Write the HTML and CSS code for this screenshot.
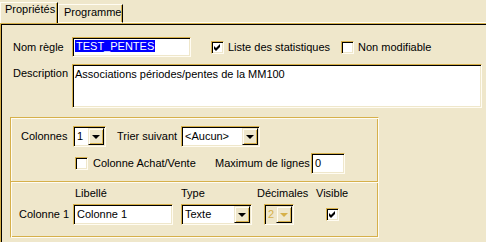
FILE: index.html
```html
<!DOCTYPE html>
<html lang="fr">
<head>
    <meta charset="UTF-8">
    <title>Propriétés de la règle</title>
    <link rel="stylesheet" href="styles.css">
</head>
<body>
    <div class="tabs">
        <div class="tab active">Propriétés</div>
        <div class="tab">Programme</div>
        <div class="tab-fill"></div>
    </div>
    <div class="panel">
        <div class="row row-name">
            <span class="lbl">Nom règle</span>
            <div class="field name"><span class="sel">TEST_PENTES</span></div>
            <div class="check wide">
                <span class="box"><svg width="11" height="11" viewBox="0 0 11 11"><path d="M2 4 L4 6 L8 2 L8 5 L4 9 L2 7 Z" fill="#000"/></svg></span>
                <span>Liste des statistiques</span>
            </div>
            <div class="check">
                <span class="box"></span>
                <span>Non modifiable</span>
            </div>
        </div>
        <div class="row row-desc">
            <span class="lbl lbl-top">Description</span>
            <div class="field desc">Associations périodes/pentes de la MM100</div>
        </div>

        <div class="group">
            <div class="section sec-top">
                <div class="line">
                    <span class="lbl lbl-cols">Colonnes</span>
                    <div class="select sel-cols">
                        <span class="val">1</span>
                        <span class="drop"><i class="arrow"></i></span>
                    </div>
                    <span class="lbl lbl-sort">Trier suivant</span>
                    <div class="select sel-sort">
                        <span class="val">&lt;Aucun&gt;</span>
                        <span class="drop"><i class="arrow"></i></span>
                    </div>
                </div>
                <div class="line line-2">
                    <div class="check achat">
                        <span class="box"></span>
                        <span>Colonne Achat/Vente</span>
                    </div>
                    <span class="lbl lbl-max">Maximum de lignes</span>
                    <div class="field max">0</div>
                </div>
            </div>
            <div class="sep"></div>
            <div class="section sec-cols">
                <div class="heads">
                    <span class="h-lib">Libellé</span>
                    <span class="h-type">Type</span>
                    <span class="h-dec">Décimales</span>
                    <span>Visible</span>
                </div>
                <div class="line line-col">
                    <span class="lbl lbl-col">Colonne 1</span>
                    <div class="field libelle">Colonne 1</div>
                    <div class="select sel-type">
                        <span class="val">Texte</span>
                        <span class="drop"><i class="arrow"></i></span>
                    </div>
                    <div class="select sel-dec disabled">
                        <span class="val">2</span>
                        <span class="drop"><i class="arrow"></i></span>
                    </div>
                    <span class="box visible"><svg width="11" height="11" viewBox="0 0 11 11"><path d="M2 4 L4 6 L8 2 L8 5 L4 9 L2 7 Z" fill="#000"/></svg></span>
                </div>
            </div>
        </div>
    </div>
</body>
</html>
```

FILE: styles.css
```css
body {
    margin: 0;
    width: 486px;
    height: 242px;
    overflow: hidden;
    background-color: #EFE7CB;
    font-family: "Liberation Sans", Arial, sans-serif;
    font-size: 11px;
    line-height: 13px;
    color: #000;
}

/* Tab strip */
.tabs {
    display: flex;
    align-items: flex-end;
    height: 23px;
}
.tab {
    box-sizing: border-box;
    border: 1px solid;
    border-color: #FFFCF2 #000 #FFFCF2 #FFFCF2;
    box-shadow: inset -1px 0 0 #D6B04A;
    height: 19px;
    width: 65px;
    padding: 1px 0 0 5px;
    white-space: nowrap;
}
.tab.active {
    height: 21px;
    width: 58px;
    border-bottom: none;
    padding: 0 0 0 4px;
}
.tab-fill {
    flex: 1;
    border-bottom: 1px solid #FFFCF2;
}

/* Panel */
.panel {
    box-sizing: border-box;
    height: 219px;
    border-top: 1px solid #D6B04A;
    border-left: 1px solid #D6B04A;
    box-shadow: inset 1px 1px 0 #000;
    padding-top: 13px;
}
.row {
    display: flex;
    padding-left: 12px;
}
.row-name {
    align-items: center;
    height: 20px;
}
.row-desc {
    margin-top: 7px;
}
.lbl {
    width: 59px;
    white-space: nowrap;
}
.lbl-top {
    padding-top: 3px;
}

/* Sunken controls */
.field, .select, .box {
    box-sizing: border-box;
    background: #fff;
    border: 1px solid;
    border-color: #D6B04A #FFFCF2 #FFFCF2 #D6B04A;
    box-shadow: inset 1px 1px 0 #000, inset -1px -1px 0 #EFE7CB;
}
.field {
    padding: 2px 3px;
    white-space: nowrap;
}
.name {
    width: 119px;
    height: 20px;
    padding-left: 2px;
}
.sel {
    background: #0000FF;
    color: #fff;
    padding: 0 1px;
}
.desc {
    width: 410px;
    height: 44px;
    padding: 3px 2px;
}

.check {
    display: flex;
    align-items: center;
    gap: 4px;
    white-space: nowrap;
}
.check.wide {
    width: 130px;
    margin-left: 20px;
}
.box {
    display: flex;
    align-items: center;
    justify-content: center;
    width: 13px;
    height: 13px;
    flex: none;
    padding: 0;
}

/* Combo boxes */
.select {
    display: flex;
    align-items: center;
    height: 21px;
    padding: 1px;
}
.select .val {
    flex: 1;
    padding-left: 2px;
    white-space: nowrap;
}
.drop {
    box-sizing: border-box;
    display: flex;
    align-items: center;
    justify-content: center;
    width: 16px;
    height: 17px;
    background: #EFE7CB;
    border: 1px solid;
    border-color: #EFE7CB #000 #000 #EFE7CB;
    box-shadow: inset 1px 1px 0 #FFFCF2, inset -1px -1px 0 #D6B04A;
}
.arrow {
    width: 0;
    height: 0;
    border-left: 4px solid transparent;
    border-right: 4px solid transparent;
    border-top: 4px solid #000;
    margin-top: 1px;
}
.select.disabled {
    background: #EFE7CB;
    color: #D6B04A;
}
.select.disabled .arrow {
    border-top-color: #D6B04A;
}

/* Group box */
.group {
    width: 367px;
    height: 119px;
    margin: 9px 0 0 9px;
    border: 1px solid;
    border-color: #D6B04A #FFFCF2 #FFFCF2 #D6B04A;
    box-shadow: inset 1px 1px 0 #FFFCF2, inset -1px -1px 0 #D6B04A;
}
.section {
    box-sizing: border-box;
}
.sec-top {
    height: 63px;
    padding-top: 8px;
}
.sep {
    height: 1px;
    background: #D6B04A;
    border-bottom: 1px solid #FFFCF2;
}
.sec-cols {
    height: 54px;
    padding-top: 4px;
}
.line {
    display: flex;
    align-items: center;
    height: 21px;
    padding-left: 10px;
}
.lbl-cols {
    width: 52px;
}
.sel-cols {
    width: 33px;
}
.lbl-sort {
    width: 64px;
    margin-left: 11px;
}
.sel-sort {
    width: 79px;
}
.line-2 {
    margin-top: 6px;
}
.achat {
    width: 140px;
    margin-left: 54px;
}
.achat span:last-child {
    margin-left: 1px;
}
.lbl-max {
    width: 96px;
}
.max {
    width: 34px;
    height: 21px;
    padding-top: 3px;
}

.heads {
    display: flex;
    padding-left: 64px;
    white-space: nowrap;
}
.h-lib { width: 106px; }
.h-type { width: 76px; }
.h-dec { width: 59px; }

.line-col {
    margin-top: 4px;
    padding-left: 8px;
}
.lbl-col {
    width: 54px;
}
.libelle {
    width: 100px;
    height: 21px;
    padding-top: 3px;
}
.sel-type {
    width: 71px;
    margin-left: 8px;
}
.sel-dec {
    width: 30px;
    margin-left: 12px;
}
.visible {
    margin-left: 32px;
}
```
